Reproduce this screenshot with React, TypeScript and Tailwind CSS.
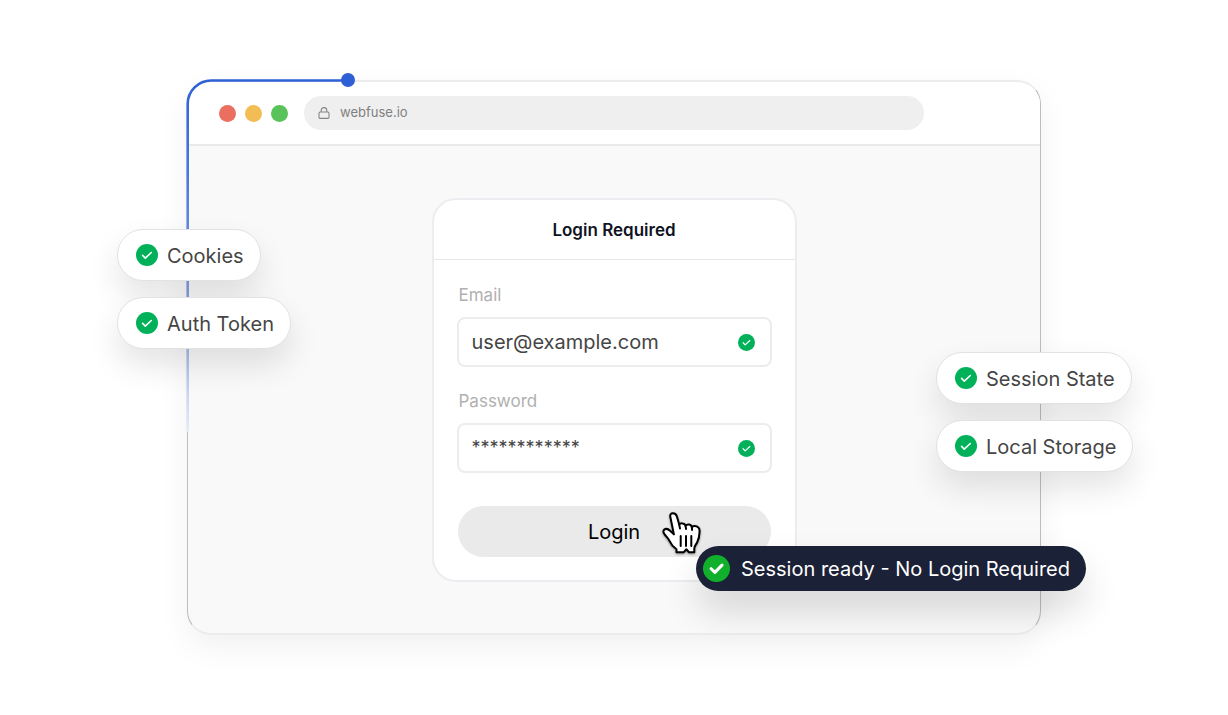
import { useId, useState } from "react";
import clsx from "clsx";

const leftBadges = ["Cookies", "Auth Token"];
const rightBadges = ["Session State", "Local Storage"];

function CheckIcon({ className, bold }: { className?: string; bold?: boolean }) {
  return (
    <svg className={clsx("shrink-0", className)} viewBox="0 0 22 22" aria-hidden="true">
      <circle cx="11" cy="11" r="11" fill={bold ? "#10b02c" : "#00b159"} />
      <path
        d={bold ? "M6.6 11.2l3.1 3 5.8-5.9" : "M6.6 11.4l2.7 2.7 6-5.6"}
        fill="none"
        stroke="white"
        strokeWidth={bold ? 2.5 : 1.6}
        strokeLinecap="round"
        strokeLinejoin="round"
      />
    </svg>
  );
}

function HandCursor() {
  return (
    <svg
      className="pointer-events-none absolute right-[70px] top-4 h-12 w-10 overflow-visible drop-shadow-[0_1px_1px_rgba(0,0,0,0.4)]"
      viewBox="0 0 40 48"
      fill="none"
      stroke="black"
      strokeWidth="2"
      strokeLinecap="round"
      strokeLinejoin="round"
      aria-hidden="true"
    >
      <path
        fill="white"
        d="M8.4 6.2C7.7 3.6 9 2.2 11 2.2s3.3 1.2 3.9 3.3l2.3 8.1c.8-1 2-1.4 3.3-1.2 1.7.2 2.7 1.1 3 2.5 1-1.2 2.2-1.6 3.6-1.3 1.5.3 2.4 1.2 2.7 2.5 1-.9 2.2-1.3 3.4-1.1 3.2.4 4.5 2.4 4.4 5.6-.1 4.3-.9 7.8-2.5 10.9-1.2 2.3-2.8 3.5-2.8 6v3.7h-5.3l-2.7-2.9-2.5 2.9h-7.3v-2.9c-3.2-2.2-5.5-5-7-8.5-1.1-2.5-3-4-4.7-6.2-1.5-2-1.8-3.7-.7-4.8 1.6-1.4 4-.9 6 .9l3.8 3.7z"
      />
      <path d="M17.2 13.6l.8 3.9M23.5 14.9l.6 3.1M29.8 16.1l.3 2.8M18.7 25v10M24 25v10M29.3 25v10" />
    </svg>
  );
}

function Badge({ children }: { children: string }) {
  return (
    <div className="flex h-[52px] items-center gap-[9px] rounded-full border border-[#e2e2e2] bg-white pl-[18px] pr-4 text-xl text-[#454545] shadow-[0_16px_32px_rgba(0,0,0,0.11)]">
      <CheckIcon className="size-[22px]" />
      <span className="whitespace-nowrap pt-0.5">{children}</span>
    </div>
  );
}

function Field({
  label,
  value,
  onChange,
  masked,
}: {
  label: string;
  value: string;
  onChange: (value: string) => void;
  masked?: boolean;
}) {
  const id = useId();

  return (
    <div>
      <label htmlFor={id} className="block px-0.5 text-[17px] leading-6 text-[#b0b0b0]">
        {label}
      </label>
      <div className="mt-2.5 flex h-[50px] items-center rounded-lg border-2 border-[#ececec] bg-white pl-[13px] pr-[15px]">
        <input
          id={id}
          type="text"
          autoComplete="off"
          className={clsx(
            "min-w-0 flex-1 bg-transparent text-[#454545] outline-none",
            masked ? "text-lg" : "text-xl"
          )}
          value={value}
          onChange={(event) => onChange(event.target.value)}
        />
        <CheckIcon className="size-[17px]" />
      </div>
    </div>
  );
}

function LoginCard() {
  const [email, setEmail] = useState("user@example.com");
  const [password, setPassword] = useState("************");

  return (
    <form
      className="w-full max-w-[365px] rounded-3xl border-2 border-[#ededf1] bg-white"
      onSubmit={(event) => event.preventDefault()}
    >
      <h2 className="border-b border-[#e6e6e6] pb-[17px] pt-[18px] text-center text-[17px] font-semibold leading-6 text-[#10131f]">
        Login Required
      </h2>
      <div className="space-y-[22px] px-[23px] py-[23px]">
        <Field label="Email" value={email} onChange={setEmail} />
        <Field label="Password" value={password} onChange={setPassword} masked />
        <div className="relative px-px pt-[11px]">
          <button
            type="submit"
            className="block h-[51px] w-full rounded-full bg-[#eaeaea] text-xl text-black"
          >
            Login
          </button>
          <HandCursor />
        </div>
      </div>
    </form>
  );
}

// Progress line running along the top left corner of the window
function ProgressLine() {
  return (
    <svg
      className="pointer-events-none absolute -left-px -top-2 h-[362px] w-[170px]"
      viewBox="0 0 170 362"
      fill="none"
      aria-hidden="true"
    >
      <defs>
        <linearGradient id="progress" x1="0" y1="0" x2="0" y2="360" gradientUnits="userSpaceOnUse">
          <stop offset="0" stopColor="#2b5fd6" />
          <stop offset="0.3" stopColor="#4f79da" />
          <stop offset="0.7" stopColor="#93abe3" />
          <stop offset="1" stopColor="#e6ebf6" />
        </linearGradient>
      </defs>
      <path d="M1.7 360V32a23.5 23.5 0 0 1 23.5-23.5H162" stroke="url(#progress)" strokeWidth="2.6" />
      <circle cx="162" cy="8" r="7" fill="#2f5fd4" />
    </svg>
  );
}

export default function App() {
  return (
    <main className="flex min-h-screen justify-center overflow-hidden bg-white px-[140px] py-20 font-['Inter','Liberation_Sans',sans-serif]">
      <div className="relative w-full max-w-[854px] self-start">
        <section className="overflow-hidden rounded-3xl border-x border-y-2 border-x-[#bdbdbd] border-y-[#ececec] bg-[#f9f9f9] shadow-[0_12px_32px_rgba(0,0,0,0.06)]">
          <header className="flex items-center border-b-2 border-[#e9e9e9] bg-white py-3.5 pl-[31px] pr-[116px]">
            <div className="flex gap-[9px]">
              <span className="size-[17px] rounded-full bg-[#ea6f5f]" />
              <span className="size-[17px] rounded-full bg-[#f3bd56]" />
              <span className="size-[17px] rounded-full bg-[#59c258]" />
            </div>
            <div className="ml-4 flex h-[34px] flex-1 items-center gap-2.5 rounded-full bg-[#efefef] pl-3.5 text-[13px] text-[#808080]">
              <svg
                className="size-3"
                viewBox="0 0 12 12"
                fill="none"
                stroke="#858585"
                strokeWidth="1.1"
                aria-hidden="true"
              >
                <rect x="1" y="5" width="10" height="6.4" rx="1.2" />
                <path d="M3.2 5V3.4a2.8 2.8 0 0 1 5.6 0V5" />
              </svg>
              webfuse.io
            </div>
          </header>
          <div className="flex justify-center px-6 pb-[51px] pt-[52px]">
            <LoginCard />
          </div>
        </section>

        <ProgressLine />

        <div className="absolute -left-[70px] top-[149px] flex flex-col items-start gap-4">
          {leftBadges.map((badge) => (
            <Badge key={badge}>{badge}</Badge>
          ))}
        </div>

        <div className="absolute left-full top-[272px] -ml-[105px] flex flex-col items-start gap-4">
          {rightBadges.map((badge) => (
            <Badge key={badge}>{badge}</Badge>
          ))}
        </div>

        <div
          role="status"
          className="absolute left-full top-[466px] -ml-[345px] flex h-[45px] items-center gap-[11px] whitespace-nowrap rounded-full bg-[#1b2136] pl-[7px] pr-4 text-xl text-white shadow-[0_20px_36px_rgba(0,0,0,0.14)]"
        >
          <CheckIcon className="size-[27px]" bold />
          Session ready - No Login Required
        </div>
      </div>
    </main>
  );
}
